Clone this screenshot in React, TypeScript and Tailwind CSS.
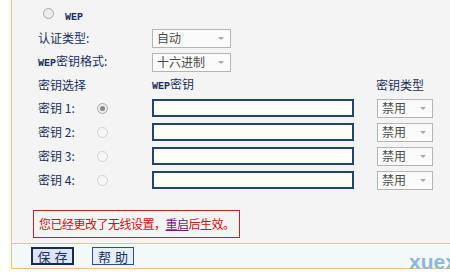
const cjk = "font-['Noto_Sans_CJK_SC','Noto_Sans',sans-serif]";

function Radio({ checked = false, faint = false }: { checked?: boolean; faint?: boolean }) {
  return (
    <div
      className={`flex h-[11px] w-[11px] items-center justify-center rounded-full border ${
        faint ? "border-[#d4d4d4] bg-[#f6f6f6]" : "border-[#a9a9a9] bg-[#ececec]"
      }`}
    >
      {checked && <div className="h-[5px] w-[5px] rounded-full bg-[#8a8a8a]" />}
    </div>
  );
}

function Select({ label, width }: { label: string; width: string }) {
  return (
    <div
      className={`flex h-[19px] ${width} items-center justify-between border border-[#b4b4b4] bg-[#fbfbfb] pl-[4px] pr-[6px]`}
    >
      <span className="text-[12px] leading-none text-[#4a4a4a]">{label}</span>
      <div className="h-0 w-0 border-x-[3px] border-t-[3px] border-x-transparent border-t-[#aaaaaa]" />
    </div>
  );
}

function Wep() {
  return <span className="font-['Liberation_Mono',monospace] text-[10px] font-bold">WEP</span>;
}

const keys = [1, 2, 3, 4];

export default function App() {
  return (
    <div className={`relative h-[276px] w-[450px] overflow-hidden bg-white text-[#1b2f5a] ${cjk}`}>
      <div className="ml-[11px] flex h-[269px] flex-col border-l border-[#f0c27a]">
        <div className="h-[244px] border-b border-[#f0c27a] bg-[#f4f4f4] pl-[26px]">
          <div className="flex h-[26px] items-center pl-[5px]">
            <Radio />
            <span className="ml-[11px]">
              <Wep />
            </span>
          </div>
          <div className="flex h-[24px] items-center">
            <span className="w-[114px] text-[12px] leading-none">认证类型:</span>
            <Select label="自动" width="w-[79px]" />
          </div>
          <div className="flex h-[24px] items-center">
            <span className="w-[114px] text-[12px] leading-none">
              <Wep />
              密钥格式:
            </span>
            <Select label="十六进制" width="w-[79px]" />
          </div>
          <div className="flex h-[22px] items-center text-[12px] leading-none">
            <span className="w-[114px]">密钥选择</span>
            <span className="w-[224px]">
              <Wep />
              密钥
            </span>
            <span>密钥类型</span>
          </div>
          {keys.map((k) => (
            <div key={k} className="flex h-[24px] items-center">
              <span className="w-[59px] text-[12px] leading-none">密钥 {k}:</span>
              <div className="w-[55px]">
                <Radio checked={k === 1} faint={k !== 1} />
              </div>
              <div className="w-[225px]">
                <div className="h-[18px] w-[202px] border-2 border-[#24446a] bg-[#fffffa]" />
              </div>
              <Select label="禁用" width="w-[56px]" />
            </div>
          ))}
          <div className="mt-[18px] ml-[-5px] h-[28px] w-[207px] whitespace-nowrap border border-[#c8202a] pl-[5px] text-[12px] leading-[26px] tracking-[-0.5px] text-[#cc1111]">
            您已经更改了无线设置，<span className="text-[#7a1a7a] underline">重启</span>后生效。
          </div>
        </div>
        <div className="flex h-[25px] items-center gap-[18px] border-b border-[#f0c27a] bg-[#f3f8f8] pl-[19px]">
          <button className="flex h-[18px] w-[43px] items-center justify-center border-2 border-[#1c2a50] bg-[#dbe5f7] text-[13px] leading-none tracking-[4px] text-[#1b2f5a]">
            <span className="pl-[4px]">保存</span>
          </button>
          <button className="flex h-[18px] w-[42px] items-center justify-center border border-[#2c4f8c] bg-[#e6eefa] text-[13px] leading-none tracking-[4px] text-[#1b2f5a]">
            <span className="pl-[4px]">帮助</span>
          </button>
        </div>
      </div>
      <span className="absolute left-[409px] top-[251px] font-['Liberation_Sans',sans-serif] text-[21px] font-bold leading-none text-[#8db8d6]">
        xuex
      </span>
    </div>
  );
}
